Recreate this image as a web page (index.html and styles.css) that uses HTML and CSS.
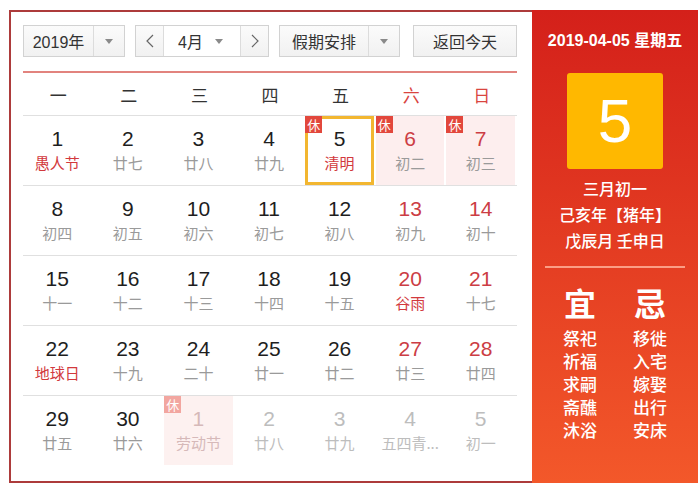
FILE: index.html
```html
<!DOCTYPE html>
<html lang="zh-CN">
<head>
<meta charset="utf-8">
<title>万年历</title>
<link rel="stylesheet" href="styles.css">
</head>
<body>
<div class="cal">
  <div class="main">
    <div class="toolbar">
      <div class="box year">
        <span class="txt">2019年</span>
        <span class="arrow"><svg width="8" height="5" viewBox="0 0 8 5"><path d="M0 0h8L4 5z" fill="#8a8a8a"/></svg></span>
      </div>
      <div class="box month">
        <span class="nav"><svg width="8" height="14" viewBox="0 0 8 14"><path d="M7 1L1 7l6 6" fill="none" stroke="#666" stroke-width="1.2"/></svg></span>
        <span class="mid"><span>4月</span><svg width="8" height="5" viewBox="0 0 8 5"><path d="M0 0h8L4 5z" fill="#8a8a8a"/></svg></span>
        <span class="nav next"><svg width="8" height="14" viewBox="0 0 8 14"><path d="M1 1l6 6-6 6" fill="none" stroke="#666" stroke-width="1.2"/></svg></span>
      </div>
      <div class="box holiday">
        <span class="txt">假期安排</span>
        <span class="arrow"><svg width="8" height="5" viewBox="0 0 8 5"><path d="M0 0h8L4 5z" fill="#8a8a8a"/></svg></span>
      </div>
      <div class="box today">返回今天</div>
    </div>
    <div class="rule"></div>
    <div class="weekdays">
      <span>一</span><span>二</span><span>三</span><span>四</span><span>五</span><span class="we">六</span><span class="we">日</span>
    </div>
    <div class="week">
      <div class="day"><div class="num">1</div><div class="lunar fest">愚人节</div></div>
      <div class="day"><div class="num">2</div><div class="lunar">廿七</div></div>
      <div class="day"><div class="num">3</div><div class="lunar">廿八</div></div>
      <div class="day"><div class="num">4</div><div class="lunar">廿九</div></div>
      <div class="day sel"><span class="badge">休</span><div class="num">5</div><div class="lunar fest">清明</div></div>
      <div class="day rest"><span class="badge">休</span><div class="num red">6</div><div class="lunar">初二</div></div>
      <div class="day rest"><span class="badge">休</span><div class="num red">7</div><div class="lunar">初三</div></div>
    </div>
    <div class="week">
      <div class="day"><div class="num">8</div><div class="lunar">初四</div></div>
      <div class="day"><div class="num">9</div><div class="lunar">初五</div></div>
      <div class="day"><div class="num">10</div><div class="lunar">初六</div></div>
      <div class="day"><div class="num">11</div><div class="lunar">初七</div></div>
      <div class="day"><div class="num">12</div><div class="lunar">初八</div></div>
      <div class="day"><div class="num red">13</div><div class="lunar">初九</div></div>
      <div class="day"><div class="num red">14</div><div class="lunar">初十</div></div>
    </div>
    <div class="week">
      <div class="day"><div class="num">15</div><div class="lunar">十一</div></div>
      <div class="day"><div class="num">16</div><div class="lunar">十二</div></div>
      <div class="day"><div class="num">17</div><div class="lunar">十三</div></div>
      <div class="day"><div class="num">18</div><div class="lunar">十四</div></div>
      <div class="day"><div class="num">19</div><div class="lunar">十五</div></div>
      <div class="day"><div class="num red">20</div><div class="lunar fest">谷雨</div></div>
      <div class="day"><div class="num red">21</div><div class="lunar">十七</div></div>
    </div>
    <div class="week">
      <div class="day"><div class="num">22</div><div class="lunar fest">地球日</div></div>
      <div class="day"><div class="num">23</div><div class="lunar">十九</div></div>
      <div class="day"><div class="num">24</div><div class="lunar">二十</div></div>
      <div class="day"><div class="num">25</div><div class="lunar">廿一</div></div>
      <div class="day"><div class="num">26</div><div class="lunar">廿二</div></div>
      <div class="day"><div class="num red">27</div><div class="lunar">廿三</div></div>
      <div class="day"><div class="num red">28</div><div class="lunar">廿四</div></div>
    </div>
    <div class="week last">
      <div class="day"><div class="num">29</div><div class="lunar">廿五</div></div>
      <div class="day"><div class="num">30</div><div class="lunar">廿六</div></div>
      <div class="day other rest"><span class="badge">休</span><div class="num">1</div><div class="lunar">劳动节</div></div>
      <div class="day other"><div class="num">2</div><div class="lunar">廿八</div></div>
      <div class="day other"><div class="num">3</div><div class="lunar">廿九</div></div>
      <div class="day other"><div class="num">4</div><div class="lunar">五四青...</div></div>
      <div class="day other"><div class="num">5</div><div class="lunar">初一</div></div>
    </div>
  </div>
  <div class="side">
    <div class="date">2019-04-05 星期五</div>
    <div class="big">5</div>
    <div class="info">
      <div>三月初一</div>
      <div>己亥年【猪年】</div>
      <div>戊辰月 壬申日</div>
    </div>
    <div class="sep"></div>
    <div class="yiji">
      <div class="col">
        <div class="head">宜</div>
        <div class="items">
          <div class="item">祭祀</div>
          <div class="item">祈福</div>
          <div class="item">求嗣</div>
          <div class="item">斋醮</div>
          <div class="item">沐浴</div>
        </div>
      </div>
      <div class="col">
        <div class="head">忌</div>
        <div class="items">
          <div class="item">移徙</div>
          <div class="item">入宅</div>
          <div class="item">嫁娶</div>
          <div class="item">出行</div>
          <div class="item">安床</div>
        </div>
      </div>
    </div>
  </div>
</div>
</body>
</html>
```

FILE: styles.css
```css
body {
  margin: 0;
  background: #fff;
  font-family: "Liberation Sans", "Noto Sans CJK SC", sans-serif;
  color: #222;
}
.cal {
  display: flex;
  margin: 10px 0 0 9px;
  width: 689px;
  height: 473px;
}
.main {
  width: 523px;
  box-sizing: border-box;
  border: 2px solid #ad3b3b;
  border-right: 0;
  padding: 13px 15px 0 12px;
}
.toolbar {
  display: flex;
  height: 32px;
}
.box {
  display: flex;
  align-items: center;
  height: 32px;
  box-sizing: border-box;
  border: 1px solid #d2d2d2;
  background: linear-gradient(#fbfbfb, #f1f1f1);
  font-size: 16px;
  color: #333;
}
.box .txt {
  flex: 1;
  text-align: center;
}
.box .arrow {
  width: 30px;
  height: 100%;
  border-left: 1px solid #dcdcdc;
  display: flex;
  align-items: center;
  justify-content: center;
}
.year { width: 102px; }
.month { width: 134px; margin-left: 10px; }
.holiday { width: 121px; margin-left: 10px; }
.today { width: 104px; margin-left: 13px; justify-content: center; }
.nav {
  width: 27px;
  height: 100%;
  display: flex;
  align-items: center;
  justify-content: center;
  border-right: 1px solid #dcdcdc;
}
.nav.next {
  border-right: 0;
  border-left: 1px solid #dcdcdc;
}
.mid {
  flex: 1;
  display: flex;
  align-items: center;
  justify-content: space-between;
  padding: 0 17px 0 14px;
  background: #fff;
  height: 100%;
}
.rule {
  margin-top: 14px;
  border-top: 2px solid #e2837e;
}
.weekdays {
  display: grid;
  grid-template-columns: repeat(7, 1fr);
  height: 42px;
  align-items: center;
  text-align: center;
  font-size: 17px;
  color: #333;
  border-bottom: 1px solid #e0e0e0;
  font-family: "Noto Sans CJK SC", sans-serif;
}
.weekdays .we { color: #d9453f; }
.week {
  display: grid;
  grid-template-columns: repeat(7, 1fr);
  height: 70px;
  box-sizing: border-box;
  border-bottom: 1px solid #e0e0e0;
}
.week.last { border-bottom: 0; }
.day {
  position: relative;
  margin-right: 2px;
  height: 69px;
  box-sizing: border-box;
  padding-top: 11px;
  text-align: center;
}
.num {
  font-size: 21px;
  line-height: 24px;
  color: #1e1e1e;
}
.num.red { color: #cc3d44; }
.lunar {
  margin-top: 1px;
  font-size: 15px;
  line-height: 22px;
  color: #9a9a9a;
  font-family: "Noto Sans CJK SC", sans-serif;
  white-space: nowrap;
}
.lunar.fest { color: #d2393d; }
.rest { background: #fdeeee; }
.sel { box-shadow: inset 0 0 0 3px #f2b630; }
.badge {
  position: absolute;
  top: 0;
  left: 0;
  width: 17px;
  height: 17px;
  background: #e2473c;
  color: #fff;
  font-size: 13px;
  line-height: 17px;
  text-align: center;
  font-family: "Noto Sans CJK SC", sans-serif;
}
.other .num, .other .lunar { color: #bdbdbd; }
.other.rest { background: #fdf1f0; }
.other.rest .badge { background: #f2a6a0; }
.other.rest .num, .other.rest .lunar { color: #d6b9b9; }
.side {
  width: 166px;
  box-sizing: border-box;
  padding-top: 21px;
  background: linear-gradient(#d4201a, #f3582a);
  color: #fff;
  text-align: center;
}
.date {
  font-size: 16px;
  line-height: 20px;
  font-weight: bold;
}
.big {
  width: 96px;
  height: 96px;
  margin: 22px auto 0;
  background: #ffb800;
  border-radius: 3px;
  font-size: 62px;
  line-height: 96px;
}
.info {
  margin-top: 6px;
  font-size: 16px;
  line-height: 26px;
  font-family: "Noto Sans CJK SC", sans-serif;
  font-weight: 500;
}
.sep {
  margin: 13px 13px 0;
  border-top: 2px solid rgba(255, 175, 150, 0.85);
}
.yiji {
  display: flex;
  justify-content: center;
  margin-top: 11px;
  font-family: "Noto Sans CJK SC", sans-serif;
}
.col { width: 70px; }
.head {
  font-size: 32px;
  line-height: 46px;
  font-weight: bold;
}
.items {
  margin-top: 1px;
}
.item {
  font-size: 17px;
  line-height: 23px;
  font-weight: 500;
}
```
